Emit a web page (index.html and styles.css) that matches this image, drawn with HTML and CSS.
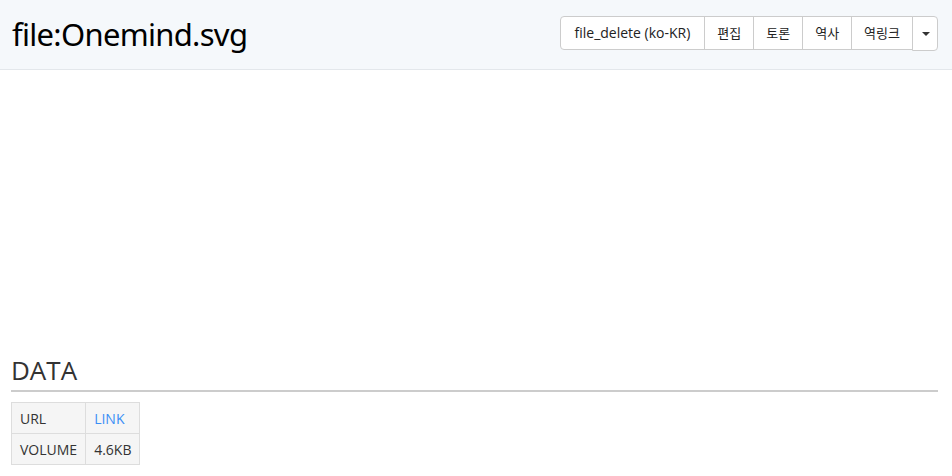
FILE: index.html
```html
<!DOCTYPE html>
<html lang="ko">
<head>
    <meta charset="UTF-8">
    <meta name="viewport" content="width=device-width, initial-scale=1.0">
    <title>file:Onemind.svg</title>
    <link rel="stylesheet" href="styles.css">
</head>
<body>
    <header class="top">
        <h1 class="title">file:Onemind.svg</h1>
        <div class="tools">
            <a class="btn" href="#">file_delete (ko-KR)</a>
            <a class="btn" href="#">편집</a>
            <a class="btn" href="#">토론</a>
            <a class="btn" href="#">역사</a>
            <a class="btn" href="#">역링크</a>
            <a class="btn caret" href="#"><span class="arrow"></span></a>
        </div>
    </header>
    <main class="content">
        <div class="preview"></div>
        <h2 class="section">DATA</h2>
        <table class="info">
            <tr>
                <td>URL</td>
                <td><a href="#">LINK</a></td>
            </tr>
            <tr>
                <td>VOLUME</td>
                <td>4.6KB</td>
            </tr>
        </table>
    </main>
</body>
</html>
```

FILE: styles.css
```css
body {
    margin: 0;
    font-family: 'Open Sans', 'Noto Sans CJK KR', sans-serif;
    color: #333;
    background: #fff;
}
.top {
    display: flex;
    justify-content: space-between;
    align-items: flex-start;
    height: 69px;
    background: #f5f8fb;
    border-bottom: 1px solid #e3e7eb;
    padding: 0 14px 0 12px;
}
.title {
    margin: 12px 0 0;
    font-family: 'Noto Sans', sans-serif;
    font-size: 31px;
    font-weight: 400;
    color: #000;
    line-height: 44px;
    letter-spacing: -0.7px;
}
.tools {
    display: flex;
    margin-top: 16px;
}
.btn {
    display: block;
    height: 32px;
    line-height: 32px;
    padding: 0 12px;
    font-size: 13px;
    color: #222;
    text-decoration: none;
    background: #fff;
    border: 1px solid #ccc;
    margin-left: -1px;
}
.btn:first-child {
    border-radius: 4px 0 0 4px;
    margin-left: 0;
    padding: 0 14px;
    font-size: 14px;
}
.btn.caret {
    width: 0;
    padding: 0 12px;
    border-radius: 0 4px 4px 0;
    position: relative;
    height: 33px;
}
.arrow {
    position: absolute;
    left: 9px;
    top: 15px;
    border-top: 4px solid #333;
    border-left: 4px solid transparent;
    border-right: 4px solid transparent;
}
.content {
    padding: 0 14px 0 11px;
}
.preview {
    height: 282px;
}
.section {
    margin: 0;
    font-size: 26px;
    font-weight: 400;
    line-height: 36px;
    color: #333;
    border-bottom: 2px solid #ccc;
    padding-bottom: 2px;
}
.info {
    margin-top: 10px;
    border-collapse: collapse;
    font-size: 14px;
}
.info td {
    border: 1px solid #ddd;
    background: #f5f5f5;
    height: 30px;
    padding: 0 8px;
}
.info a {
    color: #3a8ef6;
    text-decoration: none;
}
```
